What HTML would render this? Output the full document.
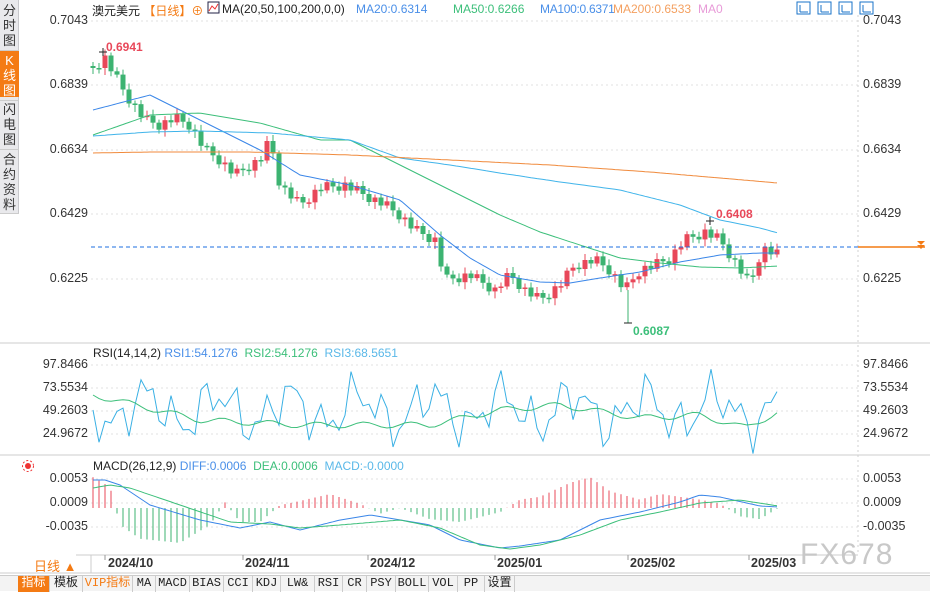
<!DOCTYPE html>
<html><head><meta charset="utf-8">
<style>
*{margin:0;padding:0;box-sizing:border-box}
body{width:930px;height:591px;background:#fff;font-family:"Liberation Sans","Noto Sans CJK SC",sans-serif;position:relative;overflow:hidden;font-size:12px}
.side{position:absolute;left:0;top:0;width:19px;height:575px;background:#e9e9ec;border-right:1px solid #c8c8cc}
.st{position:absolute;left:0;width:19px;font-size:13px;line-height:15px;text-align:center;color:#333}
.t{position:absolute;white-space:nowrap;font-size:12px}
.ax{position:absolute;font-size:12.5px;color:#333;white-space:nowrap}
.tabs{position:absolute;left:0;top:575px;width:930px;height:16px;background:#f3f3f3;border-top:1px solid #ccc}
.tab{position:absolute;top:0;height:16px;font-size:12px;line-height:15px;text-align:center;border-right:1px solid #ccc;color:#222;font-family:"Liberation Mono","Noto Sans CJK SC",monospace}
</style></head><body>
<div class="side">
<div class="st" style="top:3px">分<br>时<br>图</div>
<div class="st" style="top:51px;height:46px;background:#f47b14;color:#fff;padding-top:2px">K<br>线<br>图</div>
<div class="st" style="top:102px">闪<br>电<br>图</div>
<div class="st" style="top:152px">合<br>约<br>资<br>料</div>
<div style="position:absolute;top:50px;left:0;width:19px;border-top:1px solid #ccc"></div>
<div style="position:absolute;top:100px;left:0;width:19px;border-top:1px solid #ccc"></div>
<div style="position:absolute;top:149px;left:0;width:19px;border-top:1px solid #ccc"></div>
<div style="position:absolute;top:213px;left:0;width:19px;border-top:1px solid #ccc;height:362px;background:#fff"></div>
</div>
<svg id="c" width="930" height="591" style="position:absolute;left:0;top:0"></svg>

<div class="t" style="left:92px;top:2px;color:#222">澳元美元 <span style="color:#f47b14">【日线】</span><span style="color:#f47b14">⊕</span></div>
<div class="t" style="left:222px;top:2px;color:#222">MA(20,50,100,200,0,0)</div>
<div class="t" style="left:356px;top:2px;color:#4a8fe8">MA20:0.6314</div>
<div class="t" style="left:453px;top:2px;color:#3cbf7a">MA50:0.6266</div>
<div class="t" style="left:540px;top:2px;color:#4a8fe8;letter-spacing:-0.3px">MA100:0.6371</div>
<div class="t" style="left:613px;top:2px;color:#f4a060">MA200:0.6533</div>
<div class="t" style="left:698px;top:2px;color:#e89ad8">MA0</div>
<div class="t" style="left:93px;top:346px;color:#222">RSI(14,14,2) <span style="color:#4a8fe8">RSI1:54.1276</span> &nbsp;<span style="color:#3cbf7a">RSI2:54.1276</span> &nbsp;<span style="color:#5ab8e8">RSI3:68.5651</span></div>
<div class="t" style="left:93px;top:459px;color:#222">MACD(26,12,9) <span style="color:#4a8fe8">DIFF:0.0006</span> &nbsp;<span style="color:#3cbf7a">DEA:0.0006</span> &nbsp;<span style="color:#5ab8e8">MACD:-0.0000</span></div>
<div class="t" style="left:106px;top:40px;color:#e8485a;font-weight:bold">0.6941</div>
<div class="t" style="left:716px;top:207px;color:#e8485a;font-weight:bold">0.6408</div>
<div class="t" style="left:633px;top:324px;color:#3cbf7a;font-weight:bold">0.6087</div>

<div class="ax" style="right:842px;top:13px">0.7043</div>
<div class="ax" style="right:842px;top:77px">0.6839</div>
<div class="ax" style="right:842px;top:142px">0.6634</div>
<div class="ax" style="right:842px;top:206px">0.6429</div>
<div class="ax" style="right:842px;top:271px">0.6225</div>
<div class="ax" style="left:863px;top:13px">0.7043</div>
<div class="ax" style="left:863px;top:77px">0.6839</div>
<div class="ax" style="left:863px;top:142px">0.6634</div>
<div class="ax" style="left:863px;top:206px">0.6429</div>
<div class="ax" style="left:863px;top:271px">0.6225</div>
<div class="ax" style="right:842px;top:357px">97.8466</div>
<div class="ax" style="right:842px;top:380px">73.5534</div>
<div class="ax" style="right:842px;top:403px">49.2603</div>
<div class="ax" style="right:842px;top:426px">24.9672</div>
<div class="ax" style="left:863px;top:357px">97.8466</div>
<div class="ax" style="left:863px;top:380px">73.5534</div>
<div class="ax" style="left:863px;top:403px">49.2603</div>
<div class="ax" style="left:863px;top:426px">24.9672</div>
<div class="ax" style="right:842px;top:471px">0.0053</div>
<div class="ax" style="right:842px;top:495px">0.0009</div>
<div class="ax" style="right:842px;top:519px">-0.0035</div>
<div class="ax" style="left:863px;top:471px">0.0053</div>
<div class="ax" style="left:863px;top:495px">0.0009</div>
<div class="ax" style="left:863px;top:519px">-0.0035</div>

<div class="t" style="left:34px;top:556px;color:#f47b14;font-size:13px">日线 ▲</div>
<div class="ax" style="left:108px;top:556px;font-weight:bold">2024/10</div>
<div class="ax" style="left:245px;top:556px;font-weight:bold">2024/11</div>
<div class="ax" style="left:370px;top:556px;font-weight:bold">2024/12</div>
<div class="ax" style="left:497px;top:556px;font-weight:bold">2025/01</div>
<div class="ax" style="left:630px;top:556px;font-weight:bold">2025/02</div>
<div class="ax" style="left:751px;top:556px;font-weight:bold">2025/03</div>
<div class="t" style="left:800px;top:538px;font-size:30px;color:#c8c8c8;letter-spacing:1px">FX678</div>

<div class="tabs">
<div class="tab" style="left:18px;width:32px;background:#f47b14;color:#fff">指标</div>
<div class="tab" style="left:50px;width:33px">模板</div>
<div class="tab" style="left:83px;width:50px;color:#f47b14">VIP指标</div>
<div class="tab" style="left:133px;width:23px">MA</div>
<div class="tab" style="left:156px;width:34px">MACD</div>
<div class="tab" style="left:190px;width:34px">BIAS</div>
<div class="tab" style="left:224px;width:29px">CCI</div>
<div class="tab" style="left:253px;width:28px">KDJ</div>
<div class="tab" style="left:281px;width:34px">LW&amp;</div>
<div class="tab" style="left:315px;width:28px">RSI</div>
<div class="tab" style="left:343px;width:24px">CR</div>
<div class="tab" style="left:367px;width:29px">PSY</div>
<div class="tab" style="left:396px;width:33px">BOLL</div>
<div class="tab" style="left:429px;width:29px">VOL</div>
<div class="tab" style="left:458px;width:27px">PP</div>
<div class="tab" style="left:485px;width:30px">设置</div>
</div>

<script>
(function(){
var s=document.getElementById('c'),h='';
function L(x1,y1,x2,y2,c,w,d){h+='<line x1="'+x1+'" y1="'+y1+'" x2="'+x2+'" y2="'+y2+'" stroke="'+c+'" stroke-width="'+(w||1)+'"'+(d?' stroke-dasharray="'+d+'"':'')+'/>';}
function P(pts,c,w){h+='<polyline fill="none" stroke="'+c+'" stroke-width="'+(w||1)+'" points="'+pts.map(function(p){return p.join(',')}).join(' ')+'"/>';}
function interp(a,x){for(var i=0;i<a.length-1;i++){if(x>=a[i][0]&&x<=a[i+1][0]){var t=(x-a[i][0])/(a[i+1][0]-a[i][0]);return a[i][1]+t*(a[i+1][1]-a[i][1]);}}return a[a.length-1][1];}
function smooth(a){var r=[];for(var x=a[0][0];x<=a[a.length-1][0];x+=3)r.push([x,interp(a,x).toFixed(1)]);return r;}
[21,85,150,214,279].forEach(function(y){L(91,y,858,y,'#e2e2e2',1,'2,3')});
[365,388,411,434].forEach(function(y){L(91,y,858,y,'#e2e2e2',1,'2,3')});
[479,503,527].forEach(function(y){L(91,y,858,y,'#e2e2e2',1,'2,3')});
L(858,15,858,555,'#d0d0d0',1,'2,3');
L(0,343,930,343,'#ccc');L(0,455,930,455,'#ccc');L(76,555,858,555,'#ccc');L(0,573,930,573,'#ccc');
L(91,555,91,573,'#ccc');
[105,243,368,495,628,749].forEach(function(x){L(x,555,x,560,'#999')});
var cl=[[93,68],[105,58],[120,85],[130,100],[145,120],[160,125],[175,118],[190,125],[205,150],[220,160],[235,175],[250,165],[260,160],[270,140],[280,185],[300,205],[320,188],[345,185],[365,195],[385,205],[400,215],[415,230],[435,240],[445,280],[470,275],[495,290],[510,275],[525,290],[540,300],[560,285],[575,265],[595,260],[610,270],[625,290],[640,270],[655,265],[670,258],[685,240],[705,232],[720,240],[735,262],[750,285],[762,248],[778,255]];
var prev=66,k=0;
for(var x=93;x<=779;x+=6){k++;var c=interp(cl,x)+((k*7)%5-2)*2.5;var o=prev;var up=c<o;var col=up?'#e8485a':'#3cb371';
var tp=Math.min(o,c),bt=Math.max(o,c);if(bt-tp<1.5)bt=tp+1.5;
L(x,tp-3-(k%4),x,bt+3+((k*3)%5),col);
h+='<rect x="'+(x-2.5)+'" y="'+tp+'" width="5" height="'+(bt-tp)+'" fill="'+col+'"/>';prev=c;}
L(628,290,628,323,'#3cb371');L(624,323,632,323,'#222');L(99,52,107,52,'#222');L(103,48,103,56,'#222');L(706,221,714,221,'#222');L(710,217,710,225,'#222');
P(smooth([[93,110],[150,95],[200,120],[260,150],[300,175],[350,185],[400,200],[440,235],[470,258],[500,275],[540,282],[570,283],[600,278],[640,272],[680,262],[720,255],[760,253],[778,253]]),'#3a86e8');
P(smooth([[93,135],[150,115],[200,113],[260,123],[320,140],[350,140],[400,165],[450,190],[500,215],[540,232],[580,245],[620,258],[660,263],[700,267],[740,268],[778,266]]),'#3cbf7a');
P(smooth([[93,136],[150,132],[200,131],[270,133],[350,140],[400,158],[450,165],[500,173],[560,182],[620,190],[680,205],[720,220],[760,228],[778,233]]),'#40b4ea');
P(smooth([[93,153],[150,152],[250,152],[350,155],[450,160],[550,165],[650,172],[720,178],[778,183]]),'#f08a3c');
L(91,247,858,247,'#1e6fe0',1,'4,3');L(858,247,925,247,'#f47b14',1.5);
h+='<polygon points="917,241,925,241,921,245" fill="#f47b14"/><polygon points="917,245,925,245,921,249" fill="#f47b14"/>';
var r1=[],r2=[];
for(var x=93,i=0;x<=779;x+=6,i++){var v=410+32*Math.sin(i*0.9)*Math.cos(i*0.37)+12*Math.sin(i*2.3);v=Math.max(368,Math.min(456,v));r1.push([x,v.toFixed(1)]);
r2.push([x,(interp([[93,395],[200,420],[300,425],[430,425],[500,410],[560,405],[640,418],[700,415],[745,428],[779,412]],x)+3*Math.sin(i*0.8)).toFixed(1)]);}
P(r1,'#3ab0e4');P(r2,'#3cbf7a');
var zy=508;
for(var x=93,i=0;x<=779;x+=6,i++){var hv=1.4*interp([[93,-22],[110,-15],[120,12],[140,22],[180,25],[210,12],[225,-4],[240,10],[260,10],[280,-2],[300,-5],[330,-10],[360,-3],[380,4],[400,0],[430,8],[460,10],[500,3],[520,-6],[540,-8],[570,-18],[590,-22],[610,-12],[640,-6],[660,-10],[700,-6],[720,-3],[740,6],[760,8],[778,0]],x);
L(x,zy,x,zy+hv,hv<0?'#e8485a':'#3cb371');}
P(smooth([[93,480],[105,480],[120,485],[150,505],[200,520],[240,528],[270,522],[300,530],[340,520],[370,515],[400,520],[430,525],[460,540],[500,548],[520,546],[560,540],[600,520],[640,512],[680,502],[700,495],[720,497],[760,506],[778,507]]),'#3a86e8');
P(smooth([[93,488],[110,485],[130,488],[180,505],[230,522],[270,524],[300,528],[340,525],[400,520],[440,528],[480,545],[510,549],[540,545],[580,535],[620,520],[660,512],[700,503],[740,500],[778,506]]),'#3cbf7a');
[797,818,839,860].forEach(function(x){h+='<rect x="'+x+'" y="2" width="13" height="12" fill="#fff" stroke="#1a73c8"/>';L(x+3,5,x+3,12,'#1a73c8');L(x+3,12,x+11,12,'#1a73c8');});
h+='<rect x="208" y="2" width="11" height="11" fill="#fff" stroke="#224"/><polyline points="209,11 212,6 215,9 218,4" fill="none" stroke="#e33"/>';
h+='<circle cx="28" cy="466" r="3" fill="#e33"/><circle cx="28" cy="466" r="5.5" fill="none" stroke="#e33" stroke-dasharray="2,2"/>';
s.innerHTML=h;
})();
</script>
</body></html>
